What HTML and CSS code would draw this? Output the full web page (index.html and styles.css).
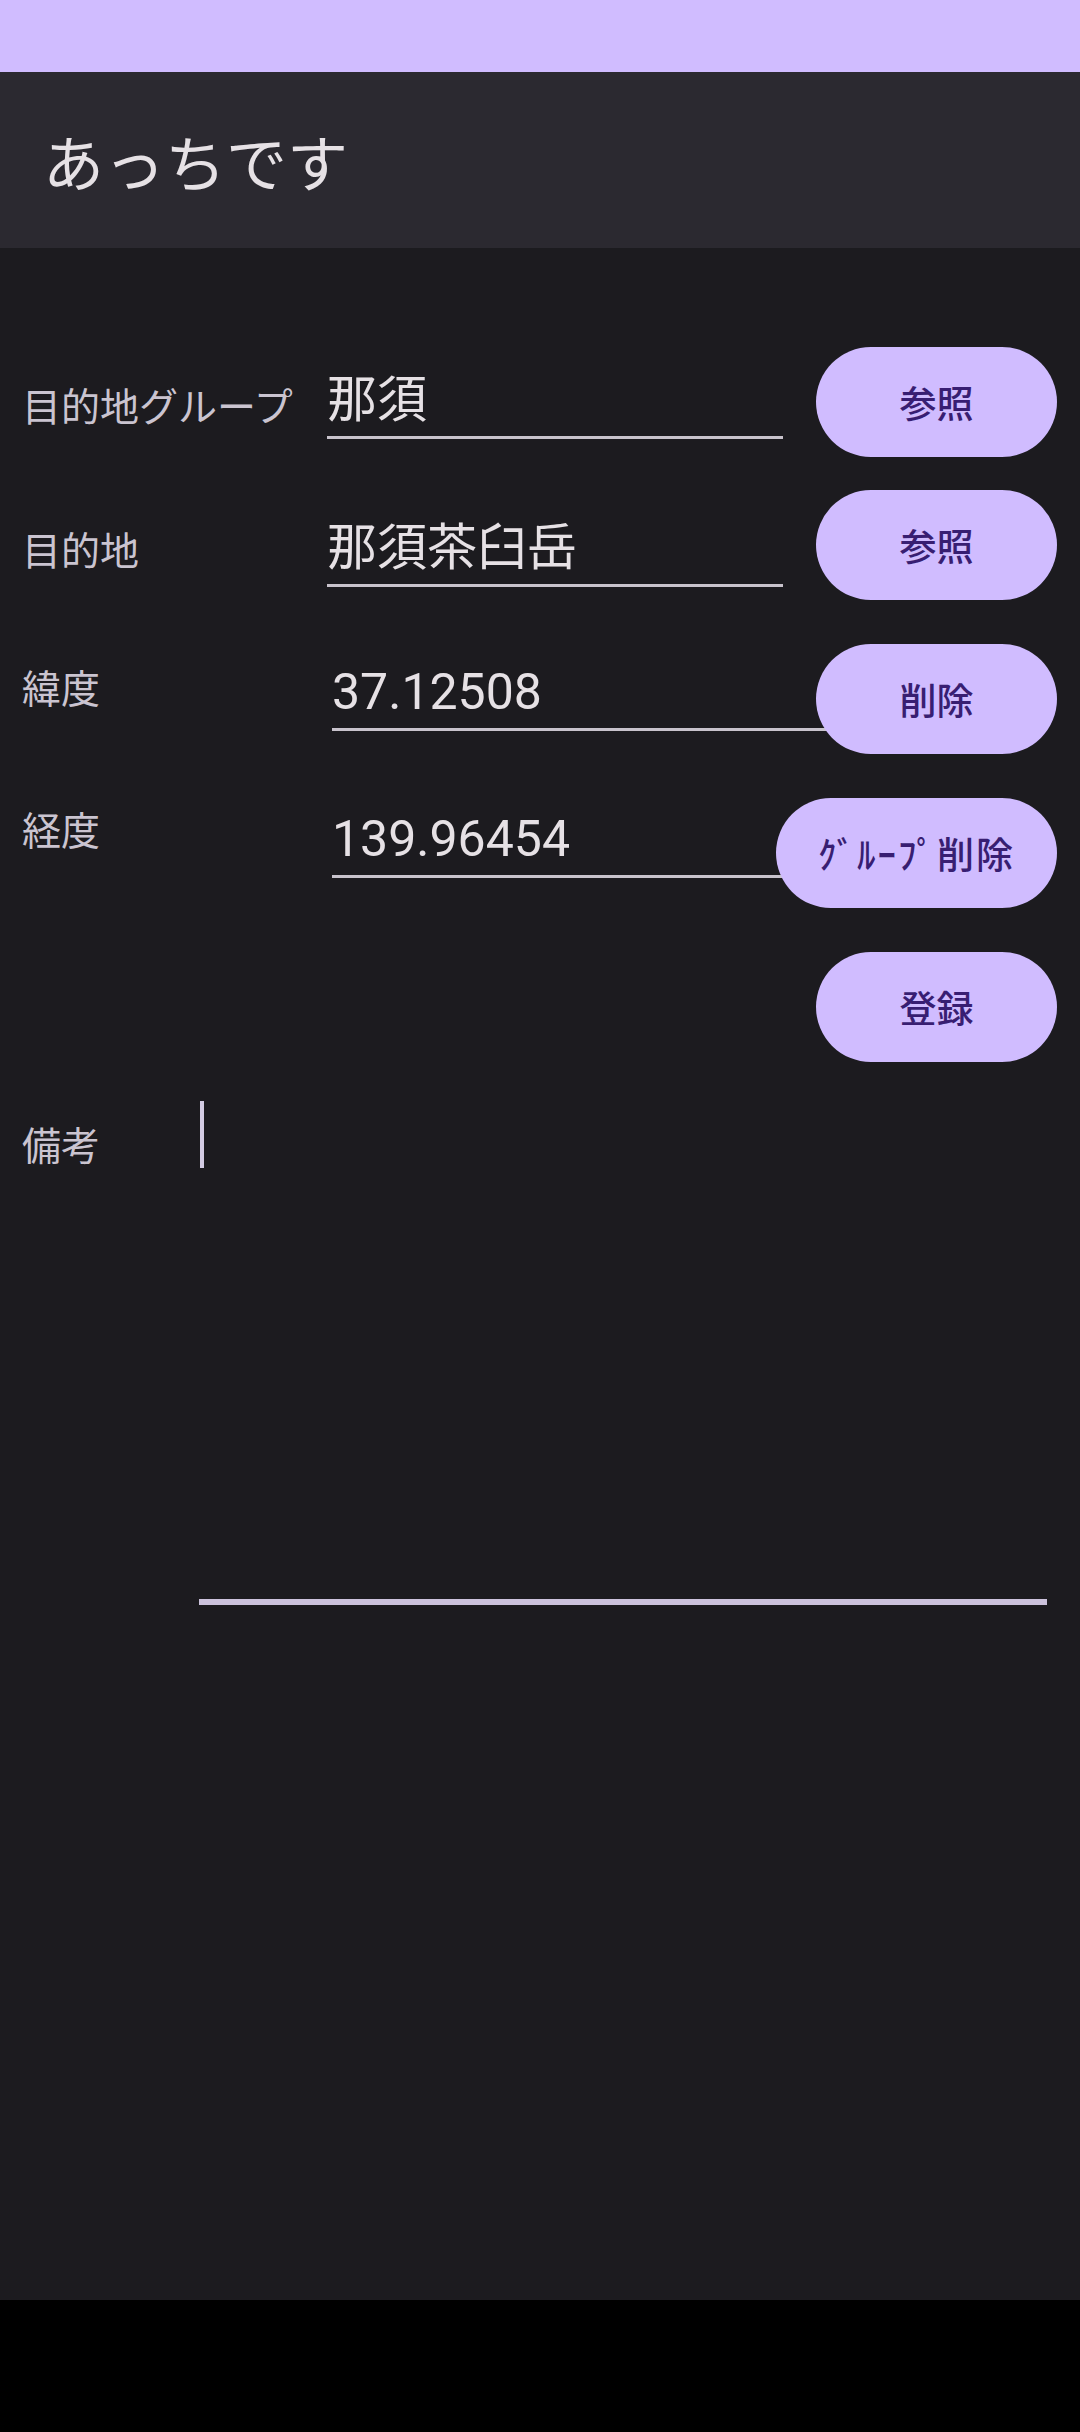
FILE: index.html
```html
<!DOCTYPE html>
<html lang="ja">
<head>
<meta charset="utf-8">
<title>あっちです</title>
<link rel="stylesheet" href="styles.css">
</head>
<body>
<div class="phone">
  <div class="status-bar"></div>
  <header class="app-bar"><h1 class="app-title">あっちです</h1></header>
  <main class="content">
    <section class="form">
      <div class="fields">
        <div class="field-row row-group">
          <span class="field-label">目的地グループ</span>
          <div class="text-input">那須</div>
        </div>
        <div class="field-row row-dest">
          <span class="field-label">目的地</span>
          <div class="text-input">那須茶臼岳</div>
        </div>
        <div class="field-row row-lat">
          <span class="field-label">緯度</span>
          <div class="text-input input-wide">37.12508</div>
        </div>
        <div class="field-row row-lng">
          <span class="field-label">経度</span>
          <div class="text-input input-wide">139.96454</div>
        </div>
      </div>
      <div class="actions">
        <button class="pill pill-first">参照</button>
        <button class="pill">参照</button>
        <button class="pill">削除</button>
        <button class="pill pill-wide">ｸﾞﾙｰﾌﾟ削除</button>
        <button class="pill">登録</button>
      </div>
    </section>
    <div class="memo-row">
      <span class="field-label memo-label">備考</span>
      <div class="memo-input"><span class="caret"></span></div>
    </div>
  </main>
  <div class="nav-bar"></div>
</div>
</body>
</html>
```
FILE: styles.css
```css
* { box-sizing: border-box; margin: 0; padding: 0; }
html, body { width: 1080px; height: 2432px; background: #000; overflow: hidden; }

.phone { display: flex; flex-direction: column; height: 2432px; }

.status-bar { flex: none; height: 72px; background: #D0BCFF; }

.app-bar {
  flex: none; height: 176px; background: #2B2930;
  display: flex; align-items: center; padding-left: 43px;
}
.app-title {
  font-family: "Noto Sans CJK JP", sans-serif; font-weight: 400;
  font-size: 61px; line-height: 1; color: #E6E1E5;
}

.content { flex: 1; background: #1C1B1F; padding-top: 99px; }
.nav-bar { flex: none; height: 132px; background: #000; }

.form { display: grid; }
.fields, .actions { grid-area: 1 / 1; }

.fields { display: flex; flex-direction: column; padding-top: 15px; padding-left: 22px; }
.field-row { display: flex; align-items: flex-start; }
.row-group { height: 148px; }
.row-dest { height: 144px; }
.row-lat { height: 147px; }

.field-label {
  flex: none; width: 305px;
  font-family: "Noto Sans CJK JP", sans-serif; font-size: 39px; line-height: 39px;
  color: #CAC4D0; white-space: nowrap;
}
.row-group .field-label { margin-top: 23px; }
.row-dest .field-label { margin-top: 19px; }
.row-lat .field-label { margin-top: 13px; }
.row-lng .field-label { margin-top: 8px; }

.text-input {
  flex: none; width: 456px; margin-top: 10px;
  font-family: Roboto, "Noto Sans CJK JP", sans-serif; font-size: 50px; line-height: 56px;
  color: #E6E1E5; white-space: nowrap;
  padding-bottom: 8px; border-bottom: 3px solid #C8C3CC;
}
.input-wide { width: 500px; margin-left: 5px; }

.actions {
  position: relative; z-index: 1;
  display: flex; flex-direction: column; align-items: flex-end; gap: 44px;
  padding-right: 23px;
}
.pill {
  height: 110px; min-width: 241px; padding: 0 40px;
  border: none; border-radius: 55px; background: #D0BCFF; color: #381E72;
  font-family: "Noto Sans CJK JP Medium", "Noto Sans CJK JP", sans-serif;
  font-size: 37px; font-weight: 500; line-height: 1;
}
.pill-first { margin-bottom: -11px; }
.pill-wide { width: 281px; padding: 0; letter-spacing: 2px; }

.memo-row { display: flex; align-items: flex-start; margin-top: 28px; padding-left: 22px; }
.memo-label { width: 177px; margin-top: 34px; }
.memo-input {
  width: 848px; height: 515px; padding-top: 11px; padding-left: 1px;
  border-bottom: 6px solid #CCC2DC;
}
.caret { display: block; width: 4px; height: 67px; background: #D3CBE3; }
```
